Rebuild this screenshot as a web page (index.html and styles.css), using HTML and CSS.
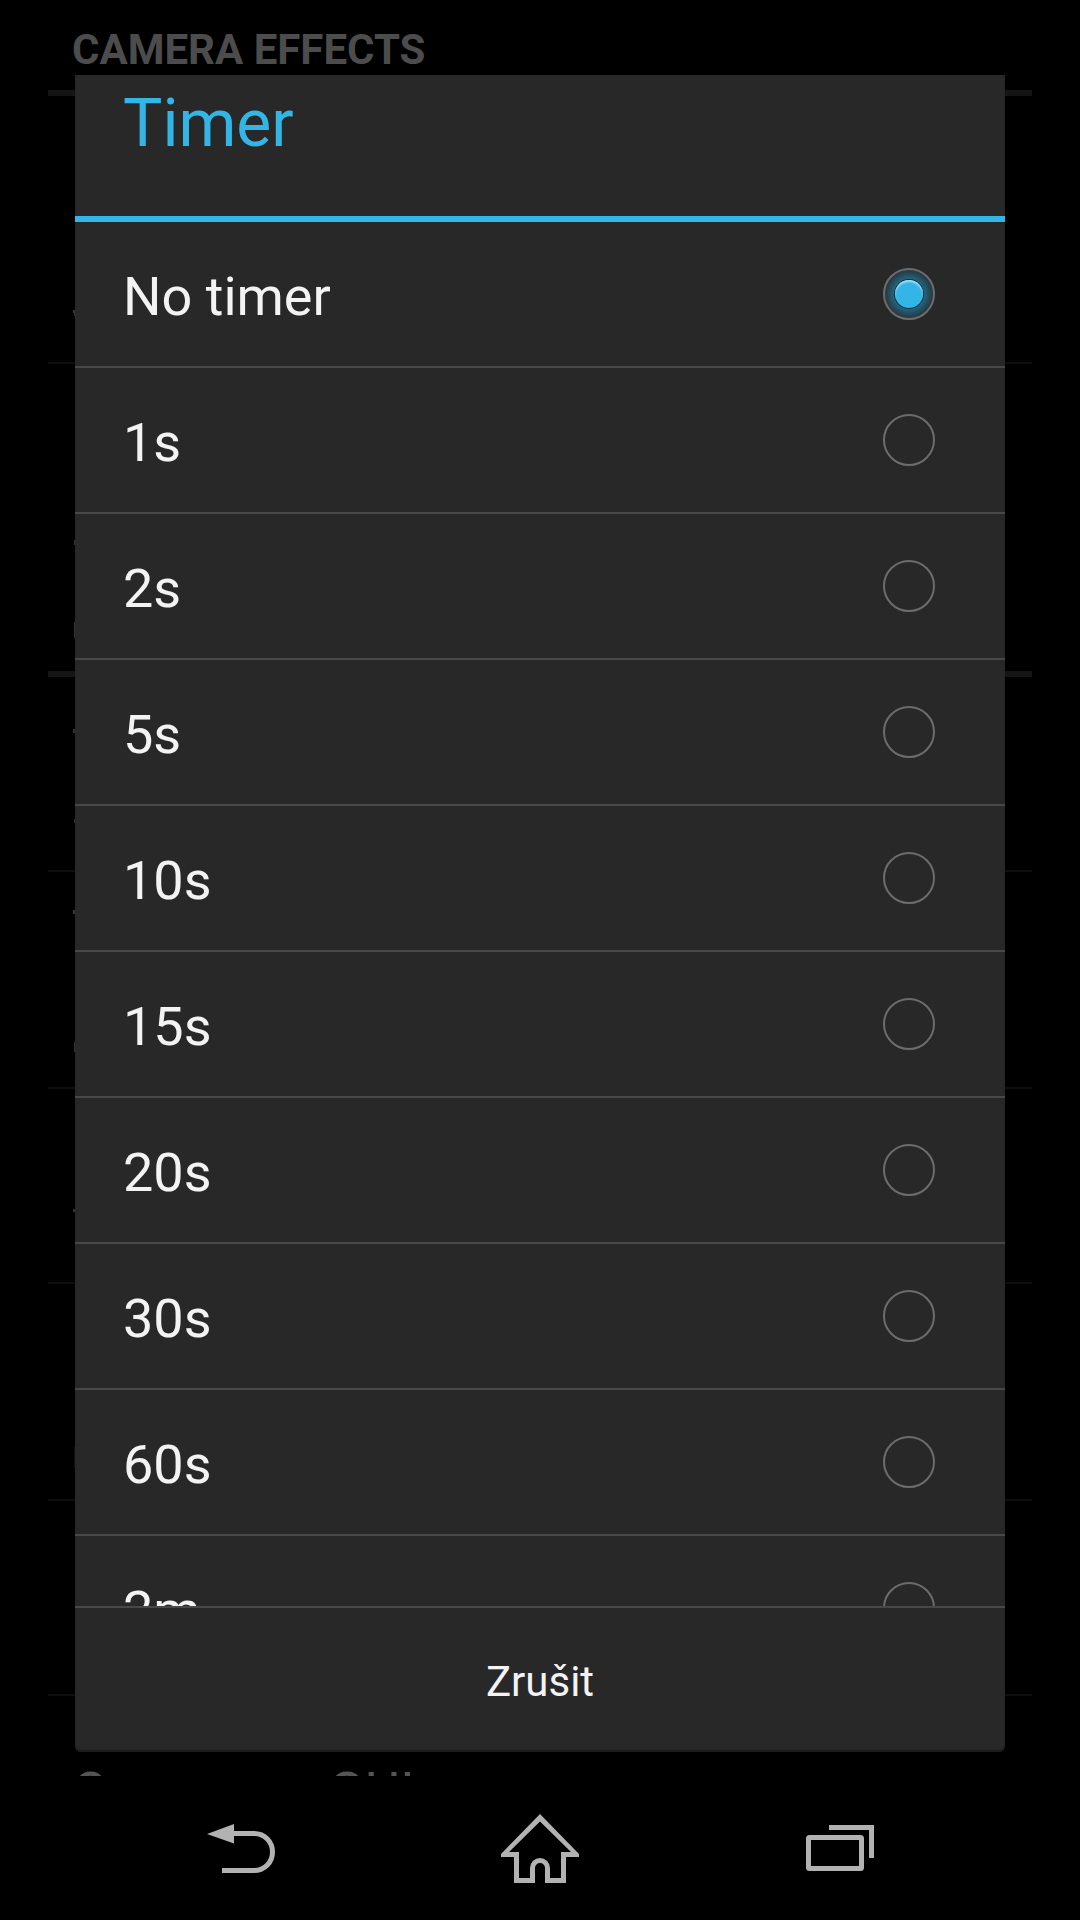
FILE: index.html
```
<!DOCTYPE html>
<html lang="cs">
<head>
  <meta charset="UTF-8">
  <meta name="viewport" content="width=device-width, initial-scale=1">
  <title>Timer</title>
  <link rel="stylesheet" href="styles.css">
</head>
<body>

  <main class="screen">
    <!-- dimmed settings page -->
    <div class="settings">
      <h2>CAMERA EFFECTS</h2>
      <div class="setting tall"></div>
      <div class="setting tall last"></div>
      <div class="setting"></div>
      <div class="setting double"></div>
      <div class="setting"></div>
      <div class="setting double"></div>
      <div class="setting"></div>
      <div class="setting-title">On-screen GUI</div>
      <svg class="edge" width="2" height="1500" viewBox="0 0 2 1500" fill="#333">
        <path d="M0 310h2v6h-1v-3h-1z"/>
        <rect x="1" y="540" width="1" height="5"/>
        <rect x="1" y="622" width="1" height="16"/>
        <rect x="0" y="729" width="2" height="4"/>
        <rect x="1" y="819" width="1" height="4"/>
        <rect x="0" y="910" width="2" height="4"/>
        <rect x="1" y="1042" width="1" height="10"/>
        <rect x="0" y="1209" width="2" height="3"/>
        <rect x="1" y="1447" width="1" height="21" fill="#111"/>
      </svg>
    </div>

    <form class="dialog" role="dialog" aria-labelledby="title">
      <h1 id="title">Timer</h1>
      <div class="options">
        <label><span>No timer</span> <input type="radio" name="timer" value="0" checked></label>
        <label><span>1s</span> <input type="radio" name="timer" value="1"></label>
        <label><span>2s</span> <input type="radio" name="timer" value="2"></label>
        <label><span>5s</span> <input type="radio" name="timer" value="5"></label>
        <label><span>10s</span> <input type="radio" name="timer" value="10"></label>
        <label><span>15s</span> <input type="radio" name="timer" value="15"></label>
        <label><span>20s</span> <input type="radio" name="timer" value="20"></label>
        <label><span>30s</span> <input type="radio" name="timer" value="30"></label>
        <label><span>60s</span> <input type="radio" name="timer" value="60"></label>
        <label><span>2m</span> <input type="radio" name="timer" value="120"></label>
      </div>
      <button type="button" class="cancel">Zrušit</button>
    </form>
  </main>

  <nav class="navbar">
    <button type="button" aria-label="Back">
      <svg width="80" height="80" viewBox="0 0 80 80">
        <path d="M7 22L34 12v19.500z" fill="#b2b2b2"/>
        <path d="M33 21.500H54C65 21.500 72.500 30 72.500 40S65 58.500 54 58.500H22" fill="none" stroke="#b2b2b2" stroke-width="5"/>
      </svg>
    </button>
    <button type="button" aria-label="Home">
      <svg width="80" height="80" viewBox="0 0 80 80" fill="#b2b2b2">
        <path fill-rule="evenodd" d="M40 2L79 42V45H66V71H45V56a5 5 0 0 0-10 0V71H14V45H1V42ZM40 9.500L9 40H19V66H30V56a10 10 0 0 1 20 0V66H61V40H71Z"/>
      </svg>
    </button>
    <button type="button" aria-label="Recent apps">
      <svg width="80" height="80" viewBox="0 0 80 80" fill="none" stroke="#b2b2b2" stroke-width="5">
        <rect x="8.500" y="25.500" width="53" height="31" rx="1"/>
        <path d="M29 15.500H71.500V46"/>
      </svg>
    </button>
  </nav>

</body>
</html>
```

FILE: styles.css
```
* {
  box-sizing: border-box;
}
body {
  margin: 0;
  height: 100vh;
  display: flex;
  flex-direction: column;
  background: #000;
  color: #f3f3f3;
  font-family: Roboto, sans-serif;
}
.screen {
  flex: 1;
  min-height: 0;
  position: relative;
  overflow: hidden;
}

/* settings behind the dialog */
.settings {
  padding: 0 48px;
  color: #4c4c4c;
}
.settings h2 {
  margin: 0;
  padding: 25px 24px 15px;
  font-size: 42px;
  line-height: 50px;
  font-weight: bold;
  border-bottom: 6px solid #151515;
}
.setting {
  height: 195px;
  border-bottom: 2px solid #0e0e0e;
}
.setting.double {
  height: 217px;
}
.setting.tall {
  height: 268px;
}
.setting.last {
  height: 313px;
  border-bottom: 6px solid #151515;
}
.setting-title {
  padding: 64px 24px 0;
  font-size: 54px;
  line-height: 64px;
  color: #555;
}
.edge {
  position: absolute;
  left: 73px;
  top: 0;
}

/* dialog */
.dialog {
  position: absolute;
  top: 75px;
  left: 75px;
  right: 75px;
  bottom: 24px;
  display: flex;
  flex-direction: column;
  background: #282828;
  border-radius: 0 0 6px 6px;
  box-shadow: inset 0 -2px 1px #1c1c1c;
}
.dialog h1 {
  margin: 0;
  padding: 10px 48px 53px;
  font-size: 66px;
  line-height: 78px;
  font-weight: normal;
  color: #33b5e5;
  border-bottom: 6px solid #33b5e5;
}
.options {
  flex: 1;
  min-height: 0;
  overflow: hidden;
}
.options label {
  display: flex;
  justify-content: space-between;
  align-items: center;
  height: 146px;
  padding: 0 70px 0 48px;
  font-size: 54px;
  line-height: 64px;
  border-bottom: 2px solid #484848;
}
.options span {
  padding-top: 5px;
}
.options input {
  appearance: none;
  width: 52px;
  height: 52px;
  margin: 0;
  border: 2px solid #6c6c6c;
  border-radius: 50%;
  display: grid;
  place-items: center;
}
.options input:checked {
  background: radial-gradient(circle, #1d6f8f 14px, #25556a 18px, #29373e 24px);
}
.options input:checked::before {
  content: "";
  width: 28px;
  height: 28px;
  border-radius: 50%;
  background: #33b5e5;
  box-shadow: 0 0 0 1px #0c2b38, inset 0 2px 2px #a5def4;
}
.cancel {
  height: 146px;
  padding: 3px 0 0;
  border: none;
  border-top: 2px solid #484848;
  background: none;
  color: inherit;
  font-family: inherit;
  font-size: 42px;
}

/* system bar */
.navbar {
  height: 144px;
  padding: 8px 90px 0;
  display: flex;
}
.navbar button {
  flex: 1;
  padding: 0;
  border: none;
  background: none;
  display: flex;
  justify-content: center;
  align-items: center;
}
```
